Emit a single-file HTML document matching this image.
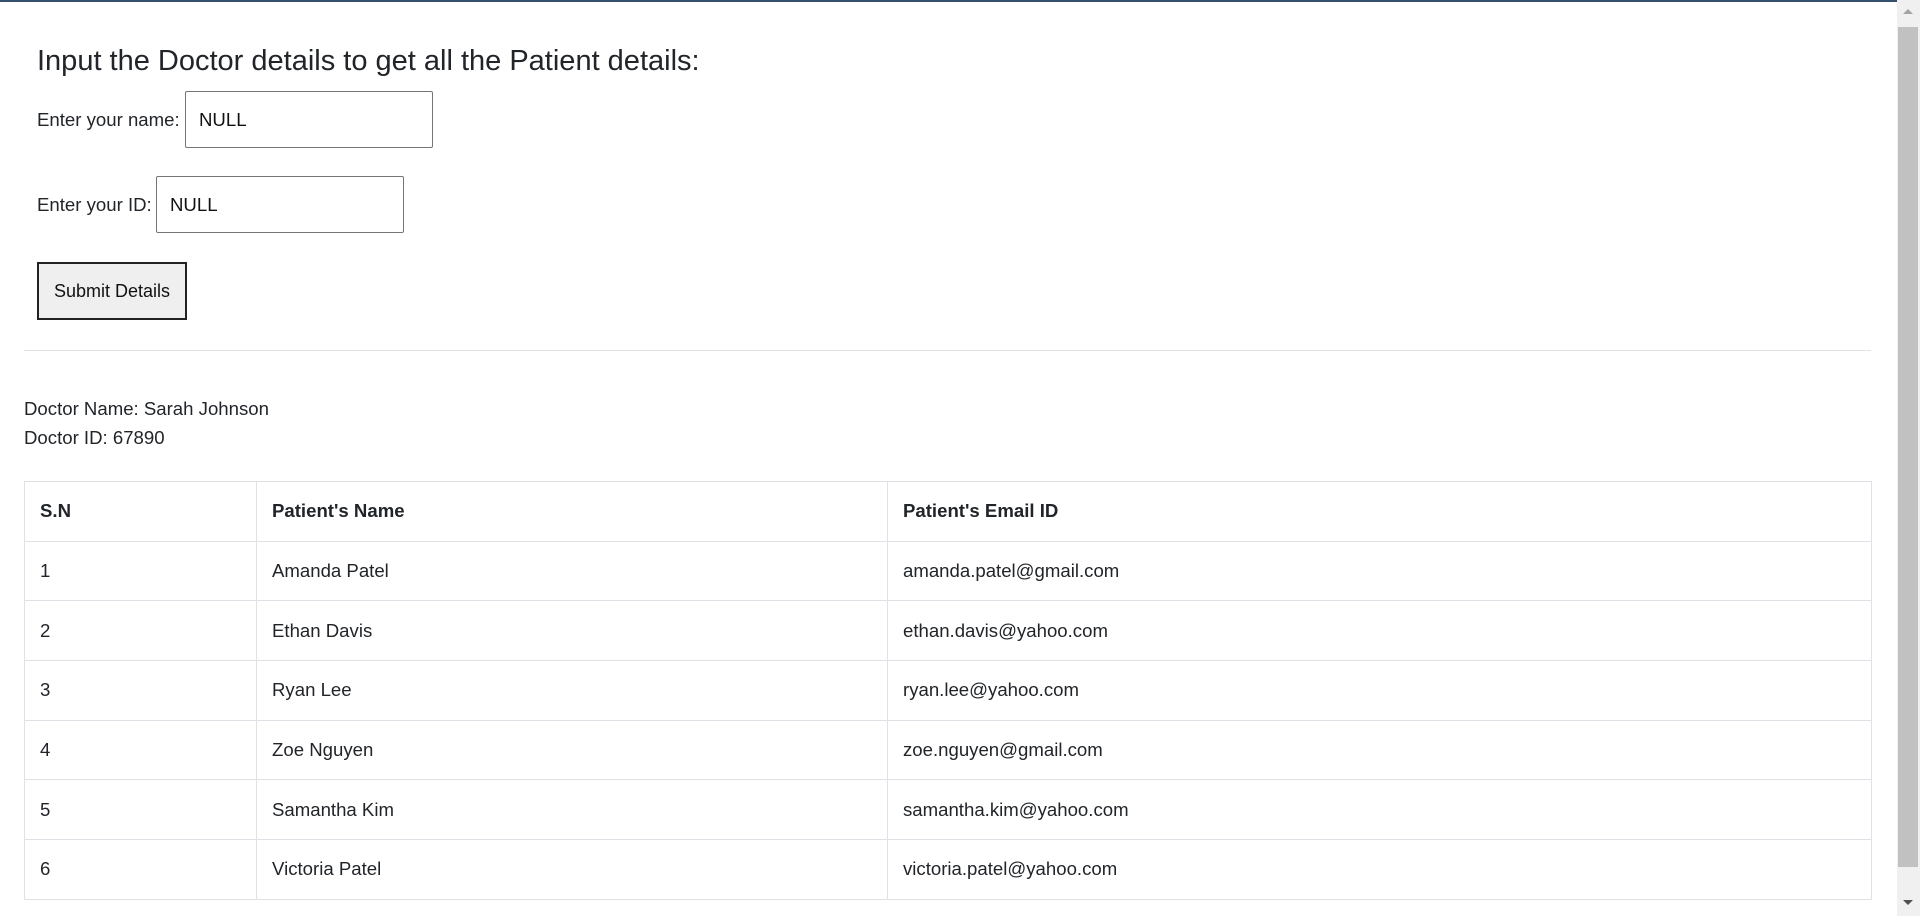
<!DOCTYPE html>
<html><head><meta charset="utf-8"><style>
html,body{margin:0;padding:0;background:#fff;overflow:hidden;width:1920px;height:916px;font-family:"Liberation Sans",sans-serif;color:#212529}
.top{position:absolute;left:0;top:0;width:1920px;height:2px;background:#34506f}
.a{position:absolute;white-space:nowrap}
h1{position:absolute;left:37px;top:44px;margin:0;font-weight:normal;font-size:29px;line-height:34px;color:#212529}
.lbl{font-size:18.6px;line-height:22px}
.inp{position:absolute;border:1px solid #767676;border-radius:2px;background:#fff;font-size:18.6px;box-sizing:border-box;padding-left:13px;display:flex;align-items:center;color:#111}
.btn{position:absolute;left:37px;top:262px;width:150px;height:58px;box-sizing:border-box;border:2px solid #222;background:#efefef;font-size:18px;display:flex;align-items:center;justify-content:center;color:#111}
.hr{position:absolute;left:24px;top:350px;width:1847px;height:1px;background:#e3e3e3}
table{position:absolute;left:24px;top:481px;width:1848px;border-collapse:collapse;font-size:18.6px}
td,th{border:1px solid #dee2e6;padding:0 15px;text-align:left;height:59.7px;box-sizing:border-box}
th{font-weight:bold;color:#212529}
.sb{position:absolute;left:1897px;top:0;width:23px;height:916px;background:#f0f0f0}
.th{position:absolute;left:1898px;top:27px;width:20px;height:840px;background:#c1c1c1}
</style></head><body>
<div class="top"></div>
<h1>Input the Doctor details to get all the Patient details:</h1>
<div class="a lbl" style="left:37px;top:109px">Enter your name:</div>
<div class="inp" style="left:185px;top:91px;width:248px;height:57px">NULL</div>
<div class="a lbl" style="left:37px;top:194px">Enter your ID:</div>
<div class="inp" style="left:156px;top:176px;width:248px;height:57px">NULL</div>
<div class="btn">Submit Details</div>
<div class="hr"></div>
<div class="a lbl" style="left:24px;top:398px">Doctor Name: Sarah Johnson</div>
<div class="a lbl" style="left:24px;top:427px">Doctor ID: 67890</div>
<table>
<colgroup><col style="width:232px"><col style="width:631px"><col></colgroup>
<tr><th>S.N</th><th>Patient's Name</th><th>Patient's Email ID</th></tr>
<tr><td>1</td><td>Amanda Patel</td><td>amanda.patel@gmail.com</td></tr>
<tr><td>2</td><td>Ethan Davis</td><td>ethan.davis@yahoo.com</td></tr>
<tr><td>3</td><td>Ryan Lee</td><td>ryan.lee@yahoo.com</td></tr>
<tr><td>4</td><td>Zoe Nguyen</td><td>zoe.nguyen@gmail.com</td></tr>
<tr><td>5</td><td>Samantha Kim</td><td>samantha.kim@yahoo.com</td></tr>
<tr><td>6</td><td>Victoria Patel</td><td>victoria.patel@yahoo.com</td></tr>
</table>
<div class="sb"></div>
<div class="th"></div>
<svg style="position:absolute;left:1900px;top:6px" width="16" height="10"><path d="M3 8 L8 3 L13 8Z" fill="#a3a3a3"/></svg>
<svg style="position:absolute;left:1900px;top:898px" width="16" height="10"><path d="M3 2 L8 7 L13 2Z" fill="#505050"/></svg>
</body></html>
